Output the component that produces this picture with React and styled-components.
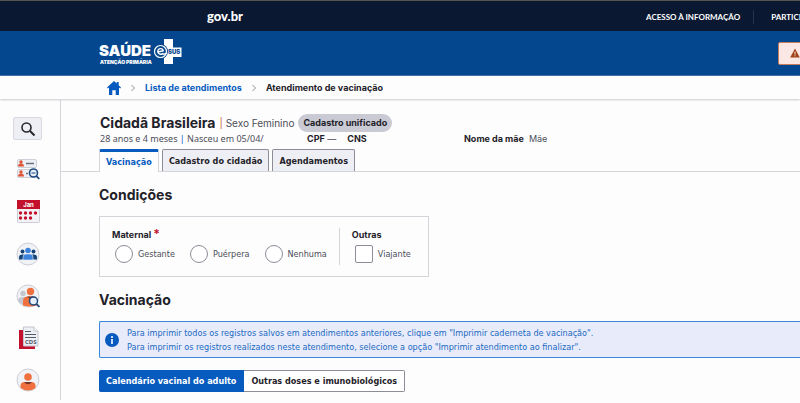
import styled, { createGlobalStyle, ThemeProvider } from "styled-components";

const theme = {
  fonts: {
    body: '"DejaVu Sans Condensed", "DejaVu Sans", sans-serif',
    info: '"Noto Sans", sans-serif',
    gov: "Lato, sans-serif",
  },
  colors: {
    bg: "#fefdfe",
    text: "#1f2229",
    muted: "#4b4e58",
    navy: "#0b1832",
    brand: "#05478f",
    primary: "#075bbf",
    border: "#d4d5da",
    control: "#8c8d96",
    alertBg: "#e8ecfa",
    danger: "#c3112d",
  },
};

const GlobalStyle = createGlobalStyle`
  * {
    box-sizing: border-box;
  }
  body {
    margin: 0;
    overflow: hidden;
    background-color: ${theme.colors.bg};
    color: ${theme.colors.text};
    font-family: Inter, sans-serif;
    font-size: 9px;
    line-height: 14px;
  }
  h1, h2, p, fieldset {
    margin: 0;
  }
  button, input {
    font: inherit;
  }
  svg {
    display: block;
  }
`;

const App = () => {
  return (
    <ThemeProvider theme={theme}>
      <GlobalStyle />
      <Page>
        <GovBar>
          <GovLogo href="#govbr">gov.br</GovLogo>
          <GovNav>
            <GovLink href="#acesso">Acesso à informação</GovLink>
            <GovLink href="#participe">Participe</GovLink>
          </GovNav>
        </GovBar>
        <Header>
          <BrandLogo />
          <WarningButton type="button" aria-label="Avisos">
            <WarningIcon />
          </WarningButton>
        </Header>
        <Breadcrumb aria-label="Navegação">
          <CrumbLink href="#inicio" aria-label="Início">
            <HomeIcon />
          </CrumbLink>
          <Chevron />
          <CrumbLink href="#lista">Lista de atendimentos</CrumbLink>
          <Chevron />
          <strong>Atendimento de vacinação</strong>
        </Breadcrumb>
        <Body>
          <Sidebar>
            <SearchButton type="button" aria-label="Buscar">
              <SearchIcon />
            </SearchButton>
            <SideButton type="button" aria-label="Lista de cidadãos">
              <ListIcon />
            </SideButton>
            <SideButton type="button" aria-label="Agenda">
              <CalendarIcon />
            </SideButton>
            <SideButton type="button" aria-label="Equipe">
              <TeamIcon />
            </SideButton>
            <SideButton type="button" aria-label="Acompanhamento">
              <FollowIcon />
            </SideButton>
            <SideButton type="button" aria-label="CDS">
              <CdsIcon />
            </SideButton>
            <SideButton type="button" aria-label="Cidadão">
              <CitizenIcon />
            </SideButton>
          </Sidebar>
          <Main>
            <Person>
              <NameRow>
                <h1>Cidadã Brasileira</h1>
                <Sex>
                  <i>|</i> Sexo Feminino
                </Sex>
                <Badge>Cadastro unificado</Badge>
              </NameRow>
              <InfoRow>
                <Age>
                  28 anos e 4 meses <i>|</i> Nasceu em 05/04/
                </Age>
                <Documents>
                  <span>
                    <b>CPF</b> —
                  </span>
                  <b>CNS</b>
                </Documents>
                <Mother>
                  <b>Nome da mãe</b>
                  <span>Mãe</span>
                </Mother>
              </InfoRow>
            </Person>
            <Tabs role="tablist">
              <Tab type="button" role="tab" aria-selected="true" $active>
                Vacinação
              </Tab>
              <Tab type="button" role="tab" aria-selected="false">
                Cadastro do cidadão
              </Tab>
              <Tab type="button" role="tab" aria-selected="false">
                Agendamentos
              </Tab>
            </Tabs>
            <Content>
              <Title>Condições</Title>
              <Conditions>
                <Group>
                  <legend>
                    Maternal <em>*</em>
                  </legend>
                  <Options>
                    {["Gestante", "Puérpera", "Nenhuma"].map((name) => (
                      <Option key={name}>
                        <Choice type="radio" name="maternal" value={name} />
                        {name}
                      </Option>
                    ))}
                  </Options>
                </Group>
                <Divider />
                <Group>
                  <legend>Outras</legend>
                  <Options>
                    <Option>
                      <Choice type="checkbox" name="viajante" />
                      Viajante
                    </Option>
                  </Options>
                </Group>
              </Conditions>
              <Title>Vacinação</Title>
              <Alert>
                <InfoIcon />
                <div>
                  <p>
                    Para imprimir todos os registros salvos em atendimentos
                    anteriores, clique em "Imprimir caderneta de vacinação".
                  </p>
                  <p>
                    Para imprimir os registros realizados neste atendimento,
                    selecione a opção "Imprimir atendimento ao finalizar".
                  </p>
                </div>
              </Alert>
              <Switcher>
                <SwitchButton type="button" $active>
                  Calendário vacinal do adulto
                </SwitchButton>
                <SwitchButton type="button">
                  Outras doses e imunobiológicos
                </SwitchButton>
              </Switcher>
            </Content>
          </Main>
        </Body>
      </Page>
    </ThemeProvider>
  );
};

/* icons and logos */

const BrandLogo = () => (
  <svg width="84" height="28" viewBox="0 0 84 28" role="img">
    <title>Saúde e-SUS Atenção Primária</title>
    <g fill="#fff" fontFamily="Inter, sans-serif" fontWeight="900">
      <text x="0" y="17" fontSize="15">
        SAÚDE
      </text>
      <text x="1" y="25" fontSize="5">
        ATENÇÃO PRIMÁRIA
      </text>
    </g>
    <path d="M65 0h9v8.500h8.500v9.500H74v7h-9z" fill="#fff" />
    <circle cx="61.500" cy="12.500" r="7.500" fill="#05478f" />
    <circle cx="61.500" cy="12.500" r="6" fill="none" stroke="#fff" strokeWidth="1.200" />
    <path
      d="M59 13l5.300-1.200a2.800 2.800 0 1 0-.9 2.800q2 1.400 4-.6"
      fill="none"
      stroke="#fff"
      strokeWidth="1.400"
    />
    <text
      x="69"
      y="15"
      fontSize="6"
      fill="#05478f"
      fontFamily="Inter, sans-serif"
      fontWeight="900"
    >
      SUS
    </text>
  </svg>
);

const WarningIcon = () => (
  <svg width="10" height="10" viewBox="0 0 10 10">
    <path d="M5 .5L9.800 9.500H.2z" fill="#a04318" />
    <path d="M5 3.500v3M5 7.300v1" stroke="#fbe7e3" />
  </svg>
);

const HomeIcon = () => (
  <svg width="14" height="14" viewBox="0 0 14 14" fill="#075bbf">
    <path d="M7 0l2.700 2.500V1h2v3.300L14 6.500l-.8 1L12 6.600V14H8.700V9.300H5.300V14H2V6.600L.8 7.500 0 6.500z" />
  </svg>
);

const Chevron = () => (
  <svg width="6" height="8" viewBox="0 0 6 8" fill="none" stroke="#8c8d96">
    <path d="M1.500 1l3 3-3 3" />
  </svg>
);

const SearchIcon = () => (
  <svg width="16" height="16" viewBox="0 0 16 16" fill="none" stroke="#26272d">
    <circle cx="6.500" cy="6.500" r="4.500" strokeWidth="1.600" />
    <path d="M10 10l4.500 4.500" strokeWidth="2" />
  </svg>
);

const ListIcon = () => (
  <svg width="24" height="24" viewBox="0 0 24 24">
    <g fill="#eeeff4" stroke="#cfd0d8">
      <rect x="1.500" y="1.500" width="19" height="8" rx="1.500" />
      <rect x="1.500" y="11.500" width="19" height="8" rx="1.500" />
    </g>
    <g fill="#dd5535">
      <circle cx="5" cy="4" r="1.700" />
      <path d="M2 8.500q0-3 3-3t3 3z" />
      <circle cx="5" cy="14" r="1.700" />
      <path d="M2 18.500q0-3 3-3t3 3z" />
    </g>
    <path d="M10 5.500h8M10 15.500h2" stroke="#6c7080" strokeWidth="1.500" />
    <circle cx="17.500" cy="15" r="4" fill="#e6eef8" stroke="#1c4a7e" strokeWidth="1.600" />
    <path d="M15.500 15h4" stroke="#1c4a7e" strokeWidth="1" />
    <path d="M20.300 17.800l3 3.200" stroke="#1c4a7e" strokeWidth="1.800" />
  </svg>
);

const CalendarIcon = () => (
  <svg width="24" height="24" viewBox="0 0 24 24">
    <rect x="1.500" y=".5" width="22" height="22" rx="1" fill="#f3f3f7" stroke="#cdced6" />
    <path d="M1 0h23v9H1z" fill="#c3112d" />
    <text
      x="12.500"
      y="7"
      textAnchor="middle"
      fontSize="6"
      fontWeight="700"
      fill="#fff"
      fontFamily="Inter, sans-serif"
    >
      Jan
    </text>
    <g fill="#c3112d">
      {[4, 9, 14, 19].map((x) => (
        <circle key={x} cx={x + 0.5} cy="13" r="1.700" />
      ))}
      {[4, 9, 14].map((x) => (
        <circle key={x} cx={x + 0.5} cy="18" r="1.700" />
      ))}
    </g>
  </svg>
);

const TeamIcon = () => (
  <svg width="24" height="24" viewBox="0 0 24 24">
    <circle cx="12" cy="12" r="11" fill="#f1f2f6" stroke="#cdced6" />
    <g fill="#164478">
      <circle cx="6.500" cy="9.500" r="2" />
      <circle cx="17.500" cy="9.500" r="2" />
      <path d="M3 17.500v-2q0-3 3-3h12q3 0 3 3v2z" />
    </g>
    <path d="M7 18v-2.500q0-3.500 3-3.500h4q3 0 3 3.500V18z" fill="#3b82dc" stroke="#f1f2f6" strokeWidth=".6" />
    <circle cx="12" cy="8.500" r="2.800" fill="#3b82dc" />
  </svg>
);

const FollowIcon = () => (
  <svg width="24" height="24" viewBox="0 0 24 24">
    <circle cx="12" cy="12" r="11" fill="#f1f2f6" stroke="#cdced6" />
    <g fill="#c5c7d0">
      <circle cx="7" cy="9.500" r="2.700" />
      <path d="M2 17q0-4 5-4h3v8q-5 0-8-4z" />
    </g>
    <circle cx="14.500" cy="7.500" r="3.700" fill="#f0713f" />
    <path d="M7 21.500V17q0-4.500 5-4.500h5q4 0 4 4v5q-6 2-14 0z" fill="#f0713f" />
    <path d="M11 12.500h7l-3.500 3z" fill="#743527" />
    <circle cx="17.500" cy="17" r="4" fill="#e6eef8" stroke="#1c4a7e" strokeWidth="1.500" />
    <path d="M20.400 19.800l3 3.200" stroke="#1c4a7e" strokeWidth="1.800" />
  </svg>
);

const CdsIcon = () => (
  <svg width="24" height="24" viewBox="0 0 24 24">
    <path d="M3 4h16v19H3z" fill="#c3112d" />
    <path d="M7.500 1H18l4 4v15H7.500z" fill="#eeeff4" stroke="#c4c5ce" />
    <path d="M18 1v4h4" fill="#fff" stroke="#c4c5ce" />
    <path d="M9 5.500h6M9 8.500h11M9 11.500h11" stroke="#555a6a" strokeWidth="1.200" />
    <text
      x="9"
      y="18"
      fontSize="6"
      fontWeight="700"
      fill="#555a6a"
      fontFamily="Noto Sans, sans-serif"
    >
      CDS
    </text>
  </svg>
);

const CitizenIcon = () => (
  <svg width="24" height="24" viewBox="0 0 24 24">
    <circle cx="12" cy="12" r="11" fill="#f1f2f6" stroke="#cdced6" />
    <circle cx="12" cy="9" r="3.800" fill="#f0713f" />
    <path d="M4.500 20v-2q0-4 4-4h7q4 0 4 4v2q-7 5-15 0z" fill="#f0713f" />
    <path d="M8 14h8q-4 4.500-8 0z" fill="#743527" />
  </svg>
);

const InfoIcon = () => (
  <svg width="14" height="14" viewBox="0 0 14 14">
    <circle cx="7" cy="7" r="7" fill="#075bbf" />
    <path d="M7 6v5M7 3v2" stroke="#fff" strokeWidth="1.600" />
  </svg>
);

/* layout */

const Page = styled.div`
  overflow: hidden;
  padding-bottom: 3px;
  white-space: nowrap;
`;

const GovBar = styled.div`
  display: flex;
  align-items: center;
  justify-content: space-between;
  height: 31px;
  padding-left: 207px;
  border-top: 1px solid #55544f;
  background-color: ${({ theme }) => theme.colors.navy};
`;

const GovLogo = styled.a`
  color: #fff;
  font-family: ${({ theme }) => theme.fonts.gov};
  font-size: 13px;
  font-weight: 900;
  text-decoration: none;
`;

const GovNav = styled.nav`
  display: flex;
  align-items: center;
  width: 154px;
  padding-top: 2px;
`;

const GovLink = styled.a`
  padding-right: 13px;
  color: #fff;
  font-family: ${({ theme }) => theme.fonts.gov};
  font-size: 8px;
  font-weight: 700;
  text-decoration: none;
  text-transform: uppercase;

  & + & {
    padding-left: 17px;
    border-left: 1px solid #24324d;
  }
`;

const Header = styled.header`
  display: flex;
  align-items: center;
  justify-content: space-between;
  height: 45px;
  padding-left: 99px;
  border-bottom: 1px solid #3c6ca6;
  background-color: ${({ theme }) => theme.colors.brand};
`;

const WarningButton = styled.button`
  width: 40px;
  height: 23px;
  margin-right: -18px;
  padding: 0 11px;
  border: 1px solid #c47b5c;
  border-radius: 2px;
  background-color: #fbe7e3;
`;

const Breadcrumb = styled.nav`
  display: flex;
  align-items: center;
  gap: 9px;
  height: 23px;
  padding-left: 107px;
  box-shadow: 0 1px 2px #c9c9ce;
`;

const CrumbLink = styled.a`
  color: ${({ theme }) => theme.colors.primary};
  font-weight: 700;
  text-decoration: none;
`;

const Body = styled.div`
  display: flex;
`;

const Sidebar = styled.aside`
  display: flex;
  flex: none;
  flex-direction: column;
  align-items: center;
  gap: 18px;
  width: 61px;
  padding: 18px 5px 0 0;
  border-right: 1px solid ${({ theme }) => theme.colors.border};
`;

const SideButton = styled.button`
  padding: 0;
  border: 0;
  background: none;
`;

const SearchButton = styled(SideButton)`
  display: grid;
  place-items: center;
  width: 29px;
  height: 23px;
  border: 1px solid #d8d9df;
  border-radius: 2px;
  background-color: #eeeff4;
`;

const Main = styled.main`
  flex: 1;
  min-width: 0;
  padding: 14px 0 8px;
`;

const Person = styled.section`
  padding: 0 0 3px 39px;

  i {
    color: ${({ theme }) => theme.colors.primary};
    font-style: normal;
  }
`;

const NameRow = styled.div`
  display: flex;
  align-items: center;
  height: 19px;

  h1 {
    font-size: 14px;
    font-weight: 700;
  }
`;

const Sex = styled.span`
  margin: 0 4px;
  color: ${({ theme }) => theme.colors.muted};
  font-size: 10px;

  i {
    color: #c76a3c;
  }
`;

const Badge = styled.span`
  padding: 2px 5px;
  border-radius: 9px;
  background-color: #c9cad4;
  font-weight: 700;
`;

const InfoRow = styled.div`
  display: flex;
  color: ${({ theme }) => theme.colors.muted};

  b {
    color: ${({ theme }) => theme.colors.text};
  }
`;

const Age = styled.span`
  flex: 0 0 207px;
  font-family: ${({ theme }) => theme.fonts.info};
`;

const Documents = styled.span`
  display: flex;
  flex: 0 0 157px;
  gap: 11px;
`;

const Mother = styled.span`
  display: flex;
  gap: 5px;
`;

const Tabs = styled.div`
  display: flex;
  gap: 3px;
  padding-left: 38px;
  border-bottom: 1px solid ${({ theme }) => theme.colors.border};
`;

const Tab = styled.button`
  height: 22px;
  padding: 0 6px;
  border: 1px solid ${({ theme }) => theme.colors.control};
  border-bottom: 0;
  border-radius: 2px 2px 0 0;
  background-color: #eeeff4;
  color: ${({ theme }) => theme.colors.text};
  font-family: ${({ theme }) => theme.fonts.body};
  font-weight: 700;

  ${({ $active, theme }) =>
    $active &&
    `
    height: 23px;
    margin-bottom: -1px;
    border-color: ${theme.colors.border};
    border-top: 3px solid ${theme.colors.primary};
    background-color: ${theme.colors.bg};
    color: ${theme.colors.primary};
  `}
`;

const Content = styled.div`
  display: flex;
  flex-direction: column;
  align-items: flex-start;
  gap: 10px;
  padding: 12px 0 0 38px;
`;

const Title = styled.h2`
  font-size: 14px;
  font-weight: 700;
  line-height: 22px;
`;

const Conditions = styled.div`
  display: flex;
  gap: 12px;
  margin-bottom: 2px;
  padding: 11px 17px 11px 12px;
  border: 1px solid ${({ theme }) => theme.colors.border};
`;

const Group = styled.fieldset`
  padding: 0;
  border: 0;

  legend {
    padding: 0;
    font-weight: 700;
  }
  em {
    color: ${({ theme }) => theme.colors.danger};
    font-size: 12px;
    font-style: normal;
    line-height: 9px;
  }
`;

const Options = styled.div`
  display: flex;
  gap: 15px;
  padding: 3px 0 2px 3px;
`;

const Option = styled.label`
  display: flex;
  align-items: center;
  gap: 5px;
  color: ${({ theme }) => theme.colors.muted};
  font-family: ${({ theme }) => theme.fonts.body};
`;

const Choice = styled.input`
  appearance: none;
  width: 18px;
  height: 18px;
  margin: 0;
  border: 1px solid ${({ theme }) => theme.colors.control};
  border-radius: ${({ type }) => (type === "radio" ? "50%" : "2px")};
  background-color: #fff;

  &:checked {
    background-color: ${({ theme }) => theme.colors.primary};
  }
`;

const Divider = styled.div`
  width: 1px;
  background-color: ${({ theme }) => theme.colors.border};
`;

const Alert = styled.div`
  display: flex;
  align-items: center;
  align-self: stretch;
  gap: 8px;
  padding: 4px 5px 3px;
  border: 1px solid #3c86d8;
  border-right: 0;
  border-radius: 2px 0 0 2px;
  background-color: ${({ theme }) => theme.colors.alertBg};
  color: #1b69c2;
  font-family: ${({ theme }) => theme.fonts.body};
`;

const Switcher = styled.div`
  display: flex;
  margin-top: 2px;
`;

const SwitchButton = styled.button`
  height: 22px;
  padding: 0 7px;
  border: 1px solid ${({ theme }) => theme.colors.control};
  border-left: 0;
  border-radius: 0 2px 2px 0;
  background-color: #fff;
  color: ${({ theme }) => theme.colors.text};
  font-family: ${({ theme }) => theme.fonts.body};
  font-weight: 700;

  ${({ $active, theme }) =>
    $active &&
    `
    border-color: ${theme.colors.primary};
    border-radius: 2px 0 0 2px;
    background-color: ${theme.colors.primary};
    color: #fff;
  `}
`;

export default App;
